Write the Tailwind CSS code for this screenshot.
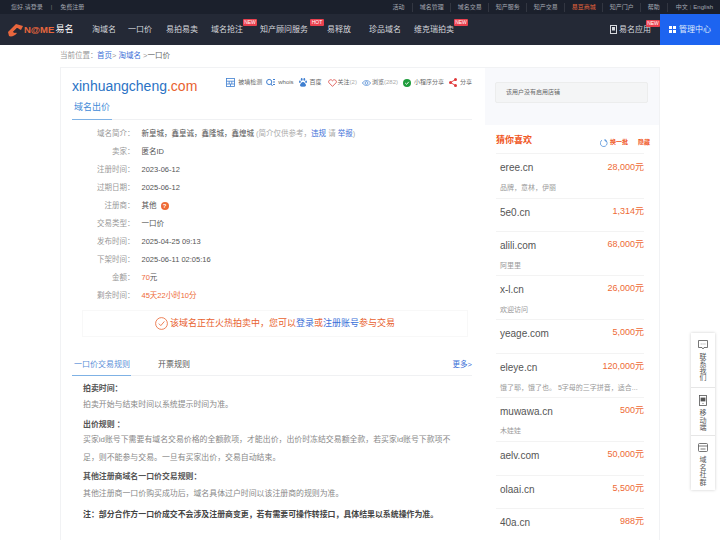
<!DOCTYPE html>
<html lang="zh-CN">
<head>
    <meta charset="UTF-8">
    <title>xinhuangcheng.com</title>
    <script src="https://cdn.jsdelivr.net/npm/@tailwindcss/browser@4"></script>
</head>
<body class="bg-white">
<div class="relative w-[720px] h-[540px] overflow-hidden [font-family:'Liberation_Sans','Noto_Sans_CJK_SC',sans-serif]">

    <!-- top bar -->
    <div class="h-[14px] bg-[#1b202c] flex items-center justify-between text-[6px] text-[#a3a7b0] pl-[11px] pr-[7px]">
        <div class="flex items-center">
            <span>您好,请登录</span>
            <span class="ml-[8px] mr-[8px] text-[#777]">|</span>
            <span>免费注册</span>
        </div>
        <div class="flex items-center">
            <span class="border-r border-white/10 pr-[7px] mr-[7px]">活动</span>
            <span class="border-r border-white/10 pr-[6.5px] mr-[6.5px]">域名管理</span>
            <span class="border-r border-white/10 pr-[6.5px] mr-[6.5px]">域名交易</span>
            <span class="border-r border-white/10 pr-[6.5px] mr-[6.5px]">知产服务</span>
            <span class="border-r border-white/10 pr-[6.5px] mr-[6.5px]">知产交易</span>
            <span class="border-r border-white/10 pr-[6.5px] mr-[6.5px] text-[#e8663d]">易豆商城</span>
            <span class="border-r border-white/10 pr-[6.5px] mr-[6.5px]">知产门户</span>
            <span class="border-r border-white/10 pr-[7.5px] mr-[7.5px]">帮助</span>
            <span>中文</span>
            <span class="ml-[2px] mr-[2px] text-[#666]">|</span>
            <span>English</span>
        </div>
    </div>

    <!-- nav -->
    <div class="relative h-[31px] bg-[#242936] flex items-center text-[8px] text-[#d5d7dc] pl-[8px]">
        <div class="flex items-center w-[66px]">
            <svg class="w-[15px] h-[14px]" viewBox="0 0 15 14">
                <path d="M0 9 L8 1 L15 3 L13 7 L9 5 L5 9 L9 10 C7 13 3 14 1 13 Z" fill="#e8663d"/>
                <path d="M5 9 L9 5 L11 6 L7 10 Z" fill="#242936"/>
            </svg>
            <span class="ml-[1px] text-[9.5px] leading-none font-bold text-[#e8663d]">N@ME</span>
            <span class="ml-[1px] text-[9px] leading-none text-white">易名</span>
        </div>
        <span class="ml-[18px]">淘域名</span>
        <span class="ml-[12px]">一口价</span>
        <span class="ml-[14px]">易拍易卖</span>
        <span class="ml-[13px] relative">域名抢注
            <span class="absolute left-[32px] -top-[5px] h-[7px] w-[14px] rounded-[1px] bg-[#e9404e] text-white text-[5px] leading-[7px] text-center">NEW</span>
        </span>
        <span class="ml-[17px] relative">知产顾问服务
            <span class="absolute left-[50px] -top-[5px] h-[7px] w-[14px] rounded-[1px] bg-[#e9404e] text-white text-[5px] leading-[7px] text-center">HOT</span>
        </span>
        <span class="ml-[19px]">易释放</span>
        <span class="ml-[18px]">珍品域名</span>
        <span class="ml-[13px] relative">维克瑞拍卖
            <span class="absolute left-[40px] -top-[5px] h-[7px] w-[14px] rounded-[1px] bg-[#e9404e] text-white text-[5px] leading-[7px] text-center">NEW</span>
        </span>
        <div class="ml-auto flex items-center h-full">
            <div class="relative flex items-center mr-[9px]">
                <svg class="w-[7px] h-[9px] mr-[2px]" viewBox="0 0 7 9"><rect x="0.5" y="0.5" width="6" height="8" fill="none" stroke="#d5d7dc"/><rect x="2" y="2" width="3" height="3.5" fill="#d5d7dc"/></svg>
                <span>易名应用</span>
                <span class="absolute -right-[9px] -top-[4px] h-[7px] w-[14px] rounded-[1px] bg-[#e9404e] text-white text-[5px] leading-[7px] text-center">NEW</span>
            </div>
            <div class="w-[60px] h-full bg-[#1d64f0] flex items-center pl-[9px] text-[#dfe8fb]">
                <svg class="w-[7px] h-[7px] mr-[3px]" viewBox="0 0 7 7" fill="#fff"><rect width="3" height="3"/><rect x="4" width="3" height="3"/><rect y="4" width="3" height="3"/><rect x="4" y="4" width="3" height="3"/></svg>
                <span>管理中心</span>
            </div>
        </div>
    </div>

    <!-- breadcrumb -->
    <div class="h-[22px] flex items-center pl-[60px] text-[7.5px] text-[#999]">
        <span>当前位置：</span>
        <span class="ml-[-0.5px] text-[#3b6fd8]">首页</span><span>&gt;&nbsp;</span>
        <span class="text-[#3b6fd8]">淘域名</span><span>&nbsp;&gt;</span>
        <span class="text-[#666]">一口价</span>
    </div>

    <div class="flex ml-[60px] w-[600px] h-[473px]">
        <!-- left panel -->
        <div class="w-[425px] shrink-0 border-l border-t border-[#f1f2f4] pl-[11px] pr-[13px]">
            <div class="h-[33px] flex items-center justify-between pt-[2px]">
                <div class="text-[14px] leading-none text-[#2a73c5]">xinhuangcheng<span class="text-[#e8622f]">.com</span></div>
                <div class="flex items-center text-[6px] text-[#666] -mt-[6px]">
                    <svg class="w-[9px] h-[9px] mr-[3px]" viewBox="0 0 9 9" fill="none" stroke="#3f7fd0" stroke-width="0.8"><rect x="0.5" y="0.5" width="8" height="8"/><path d="M0.5 3.2H8.5M3.2 3.2V6M5.8 3.2V6M0.5 6H8.5M4.5 6V8.5"/></svg>
                    <span>被墙检测</span>
                    <svg class="w-[9px] h-[9px] ml-[4px] mr-[3px]" viewBox="0 0 9 9" fill="none" stroke="#3f7fd0" stroke-width="1"><circle cx="3.2" cy="4" r="2.6"/><path d="M5 6L6.5 8M7 1.5H9M7 4H9M7 6.5H9"/></svg>
                    <span>whois</span>
                    <svg class="w-[8px] h-[9px] ml-[5px] mr-[3px]" viewBox="0 0 8 9" fill="#3f7fd0"><ellipse cx="2.7" cy="1.4" rx="0.9" ry="1.3"/><ellipse cx="5.3" cy="1.4" rx="0.9" ry="1.3"/><ellipse cx="0.9" cy="3.7" rx="0.9" ry="1.2"/><ellipse cx="7.1" cy="3.7" rx="0.9" ry="1.2"/><path d="M4 4C2.6 4 1 6 1 7.3 1 8.6 2.6 9 4 8.5 5.4 9 7 8.6 7 7.3 7 6 5.4 4 4 4Z"/></svg>
                    <span>百度</span>
                    <svg class="w-[9px] h-[8px] ml-[6px] mr-[1px]" viewBox="0 0 9 8" fill="none" stroke="#d9433f" stroke-width="0.8"><path d="M4.5 7.4L0.9 3.7C-0.4 1.6 2.9-0.6 4.5 1.8 6.1-0.6 9.4 1.6 8.1 3.7Z"/></svg>
                    <span>关注<span class="text-[#aaa]">(2)</span></span>
                    <svg class="w-[9px] h-[6px] ml-[5px] mr-[1px]" viewBox="0 0 9 6" fill="none" stroke="#3f7fd0" stroke-width="0.7"><path d="M0.4 3C2.5-0.3 6.5-0.3 8.6 3 6.5 6.3 2.5 6.3 0.4 3Z"/><circle cx="4.5" cy="3" r="1.4"/></svg>
                    <span>浏览<span class="text-[#aaa]">(282)</span></span>
                    <svg class="w-[8px] h-[8px] ml-[5px] mr-[3px]" viewBox="0 0 8 8"><circle cx="4" cy="4" r="4" fill="#1f9d3c"/><path d="M2.2 4L3.6 5.4 5.8 2.8" fill="none" stroke="#fff" stroke-width="0.9"/></svg>
                    <span>小程序分享</span>
                    <svg class="w-[8px] h-[9px] ml-[5px] mr-[3px]" viewBox="0 0 8 9" fill="#e0383a"><circle cx="1.5" cy="4.5" r="1.5"/><circle cx="6.5" cy="1.5" r="1.5"/><circle cx="6.5" cy="7.5" r="1.5"/><path d="M1.5 4.5L6.5 1.5M1.5 4.5L6.5 7.5" stroke="#e0383a" stroke-width="0.9"/></svg>
                    <span>分享</span>
                </div>
            </div>

            <div class="h-[19px] border-b border-[#f0f1f3]">
                <div class="w-[40px] h-[19px] border-b border-[#7fb2e5] text-[9px] leading-[13px] text-[#3f8bd8] pl-[2px]">域名出价</div>
            </div>

            <!-- detail rows -->
            <div class="pt-[5px] text-[7.5px] text-[#555]">
                <div class="flex items-center h-[18px]">
                    <span class="w-[62.5px] text-right text-[#999]">域名简介：</span>
                    <span class="ml-[7px]">新皇城，鑫皇诚，鑫隆城，鑫煌城 <span class="text-[#aaa]">(简介仅供参考，<span class="text-[#3b6fd8]">违规</span> 请 <span class="text-[#3b6fd8]">举报</span>)</span></span>
                </div>
                <div class="flex items-center h-[18px]">
                    <span class="w-[62.5px] text-right text-[#999]">卖家：</span>
                    <span class="ml-[7px]">匿名ID</span>
                </div>
                <div class="flex items-center h-[18px]">
                    <span class="w-[62.5px] text-right text-[#999]">注册时间：</span>
                    <span class="ml-[7px]">2023-06-12</span>
                </div>
                <div class="flex items-center h-[18px]">
                    <span class="w-[62.5px] text-right text-[#999]">过期日期：</span>
                    <span class="ml-[7px]">2025-06-12</span>
                </div>
                <div class="flex items-center h-[18px]">
                    <span class="w-[62.5px] text-right text-[#999]">注册商：</span>
                    <span class="ml-[7px]">其他</span>
                    <span class="ml-[4px] w-[8px] h-[8px] rounded-full bg-[#ee6a35] text-white text-[6px] leading-[8px] text-center font-bold">?</span>
                </div>
                <div class="flex items-center h-[18px]">
                    <span class="w-[62.5px] text-right text-[#999]">交易类型：</span>
                    <span class="ml-[7px]">一口价</span>
                </div>
                <div class="flex items-center h-[18px]">
                    <span class="w-[62.5px] text-right text-[#999]">发布时间：</span>
                    <span class="ml-[7px]">2025-04-25 09:13</span>
                </div>
                <div class="flex items-center h-[18px]">
                    <span class="w-[62.5px] text-right text-[#999]">下架时间：</span>
                    <span class="ml-[7px]">2025-06-11 02:05:16</span>
                </div>
                <div class="flex items-center h-[18px]">
                    <span class="w-[62.5px] text-right text-[#999]">金额：</span>
                    <span class="ml-[7px]"><span class="text-[#ee6a35]">70</span>元</span>
                </div>
                <div class="flex items-center h-[18px]">
                    <span class="w-[62.5px] text-right text-[#999]">剩余时间：</span>
                    <span class="ml-[7px] text-[#ee6a35]">45天22小时10分</span>
                </div>
            </div>

            <!-- notice -->
            <div class="mt-[5px] ml-[10px] w-[386px] h-[27px] border border-[#f8f8f8] flex items-center justify-center text-[9px] text-[#e8622f]">
                <svg class="w-[13px] h-[13px] mr-[2px]" viewBox="0 0 13 13" fill="none" stroke="#e8622f" stroke-width="0.8"><circle cx="6.5" cy="6.5" r="5.9"/><path d="M3.8 6.6L5.8 8.6 9.4 4.4"/></svg>
                <span>该域名正在火热拍卖中，您可以<span class="text-[#3b6fd8]">登录</span>或<span class="text-[#3b6fd8]">注册账号</span>参与交易</span>
            </div>

            <!-- rules tabs -->
            <div class="mt-[18px] h-[21px] border-b border-[#f0f1f3] flex items-start text-[8px]">
                <div class="w-[59px] h-[21px] border-b border-[#7fb2e5] text-[#5b8fd8] pl-[2px] leading-[20px]">一口价交易规则</div>
                <div class="ml-[27px] text-[#555] leading-[20px]">开票规则</div>
                <div class="ml-auto text-[#3b6fd8] text-[7.5px] leading-[20px]">更多&gt;</div>
            </div>

            <!-- rules text -->
            <div class="pl-[11px] text-[7.9px] text-[#888]">
                <div class="mt-[6px] h-[13px] leading-[13px] font-bold text-[#555]">拍卖时间：</div>
                <div class="mt-[3px] h-[13px] leading-[13px]">拍卖开始与结束时间以系统提示时间为准。</div>
                <div class="mt-[7px] h-[13px] leading-[13px] font-bold text-[#555]">出价规则 ：</div>
                <div class="leading-[18px] w-[376px]">买家id账号下需要有域名交易价格的全额款项，才能出价，出价时冻结交易额全款，若买家id账号下款项不足，则不能参与交易。一旦有买家出价，交易自动结束。</div>
                <div class="mt-[3px] h-[13px] leading-[13px] font-bold text-[#555]">其他注册商域名一口价交易规则：</div>
                <div class="mt-[4px] h-[13px] leading-[13px]">其他注册商一口价购买成功后，域名具体过户时间以该注册商的规则为准。</div>
                <div class="mt-[8px] h-[13px] leading-[13px] font-bold text-[#444]">注：部分合作方一口价成交不会涉及注册商变更，若有需要可操作转接口，具体结果以系统操作为准。</div>
            </div>
        </div>

        <!-- right panel -->
        <div class="w-[175px] shrink-0 border-r border-[#f1f2f4]">
            <div class="h-[58px] bg-[#f8f9fc] border-t border-[#f1f2f4] pt-[14px] pl-[10px]">
                <div class="w-[153px] h-[21px] bg-[#f4f5f6] border border-[#eceded] rounded-[2px] flex items-center pl-[10px] text-[6px] text-[#666]">该用户没有启用店铺</div>
            </div>
            <div class="ml-[11px] w-[148px]">
                <div class="relative h-[29px] border-b border-[#f3f3f3]">
                    <span class="absolute left-0 top-[9px] text-[9px] leading-[13px] font-bold text-[#f0561d]">猜你喜欢</span>
                    <svg class="absolute left-[104px] top-[14px] w-[8px] h-[8px]" viewBox="0 0 8 8" fill="none" stroke="#4f8fd8" stroke-width="0.8"><path d="M5 1A3.4 3.4 0 1 1 2 1.2M5 0V2H7"/></svg>
                    <span class="absolute left-[114px] top-[13px] text-[6px] leading-[9px] font-bold text-[#f0561d]">换一批</span>
                    <span class="absolute left-[142px] top-[13px] text-[6px] leading-[9px] font-bold text-[#f0561d] whitespace-nowrap">隐藏</span>
                </div>

                <div class="h-[44.5px] border-b border-[#f3f3f3] pl-[4px]">
                    <div class="h-[27px] flex items-center justify-between"><span class="text-[10px] text-[#555]">eree.cn</span><span class="text-[9px] text-[#ee6a35]">28,000元</span></div>
                    <div class="mt-[1px] text-[7px] leading-[12px] text-[#999]">品牌，意林，伊丽</div>
                </div>
                <div class="h-[33.5px] border-b border-[#f3f3f3] pl-[4px]">
                    <div class="h-[27px] flex items-center justify-between"><span class="text-[10px] text-[#555]">5e0.cn</span><span class="text-[9px] text-[#ee6a35]">1,314元</span></div>
                </div>
                <div class="h-[44px] border-b border-[#f3f3f3] pl-[4px]">
                    <div class="h-[26px] flex items-center justify-between"><span class="text-[10px] text-[#555]">alili.com</span><span class="text-[9px] text-[#ee6a35]">68,000元</span></div>
                    <div class="mt-[2px] text-[7px] leading-[12px] text-[#999]">阿里里</div>
                </div>
                <div class="h-[44px] border-b border-[#f3f3f3] pl-[4px]">
                    <div class="h-[26px] flex items-center justify-between"><span class="text-[10px] text-[#555]">x-l.cn</span><span class="text-[9px] text-[#ee6a35]">26,000元</span></div>
                    <div class="mt-[2px] text-[7px] leading-[12px] text-[#999]">欢迎访问</div>
                </div>
                <div class="h-[34px] border-b border-[#f3f3f3] pl-[4px]">
                    <div class="h-[26px] flex items-center justify-between"><span class="text-[10px] text-[#555]">yeage.com</span><span class="text-[9px] text-[#ee6a35]">5,000元</span></div>
                </div>
                <div class="h-[44px] border-b border-[#f3f3f3] pl-[4px]">
                    <div class="h-[26px] flex items-center justify-between"><span class="text-[10px] text-[#555]">eleye.cn</span><span class="text-[9px] text-[#ee6a35]">120,000元</span></div>
                    <div class="mt-[2px] text-[7px] leading-[12px] text-[#999] whitespace-nowrap">饿了耶，饿了也。 5字母的三字拼音，适合...</div>
                </div>
                <div class="h-[44px] border-b border-[#f3f3f3] pl-[4px]">
                    <div class="h-[26px] flex items-center justify-between"><span class="text-[10px] text-[#555]">muwawa.cn</span><span class="text-[9px] text-[#ee6a35]">500元</span></div>
                    <div class="mt-[1px] text-[7px] leading-[12px] text-[#999]">木娃娃</div>
                </div>
                <div class="h-[34px] border-b border-[#f3f3f3] pl-[4px]">
                    <div class="h-[26px] flex items-center justify-between"><span class="text-[10px] text-[#555]">aelv.com</span><span class="text-[9px] text-[#ee6a35]">50,000元</span></div>
                </div>
                <div class="h-[33px] border-b border-[#f3f3f3] pl-[4px]">
                    <div class="h-[26px] flex items-center justify-between"><span class="text-[10px] text-[#555]">olaai.cn</span><span class="text-[9px] text-[#ee6a35]">5,500元</span></div>
                </div>
                <div class="h-[26px] pl-[4px]">
                    <div class="h-[26px] flex items-center justify-between"><span class="text-[10px] text-[#555]">40a.cn</span><span class="text-[9px] text-[#ee6a35]">988元</span></div>
                </div>
            </div>
        </div>
    </div>

    <!-- floating side tools -->
    <div class="absolute left-[691px] top-[333px] w-[24px] bg-white shadow-[0_0_3px_rgba(0,0,0,0.2)] text-[7px] text-[#555] flex flex-col">
        <div class="h-[55px] border-b border-[#e6e6e6] flex flex-col items-center pt-[7px]">
            <svg class="w-[10px] h-[10px]" viewBox="0 0 10 10" fill="none" stroke="#555" stroke-width="0.8"><path d="M0.5 0.5H9.5V7.5H6L5 9 4 7.5H0.5Z"/><path d="M2.8 4H3.5M4.7 4H5.4M6.6 4H7.3"/></svg>
            <span class="mt-[3px] w-[7px] leading-[7px] break-all">联系我们</span>
        </div>
        <div class="h-[48px] border-b border-[#e6e6e6] flex flex-col items-center pt-[7px]">
            <svg class="w-[8px] h-[11px]" viewBox="0 0 8 11" fill="none" stroke="#555" stroke-width="0.8"><rect x="0.5" y="0.5" width="7" height="10"/><rect x="2" y="3" width="4" height="3" fill="#555"/><path d="M3.5 8.5H4.5"/></svg>
            <span class="mt-[3px] w-[7px] leading-[7.5px] break-all">移动端</span>
        </div>
        <div class="h-[54px] flex flex-col items-center pt-[7px]">
            <svg class="w-[10px] h-[9px]" viewBox="0 0 10 9" fill="none" stroke="#555" stroke-width="0.8"><rect x="0.5" y="0.5" width="9" height="8" rx="1"/><path d="M0.5 3H9.5M2.5 6H7.5"/></svg>
            <span class="mt-[4px] w-[7px] leading-[7.5px] break-all">域名社群</span>
        </div>
    </div>
</div>
</body>
</html>
